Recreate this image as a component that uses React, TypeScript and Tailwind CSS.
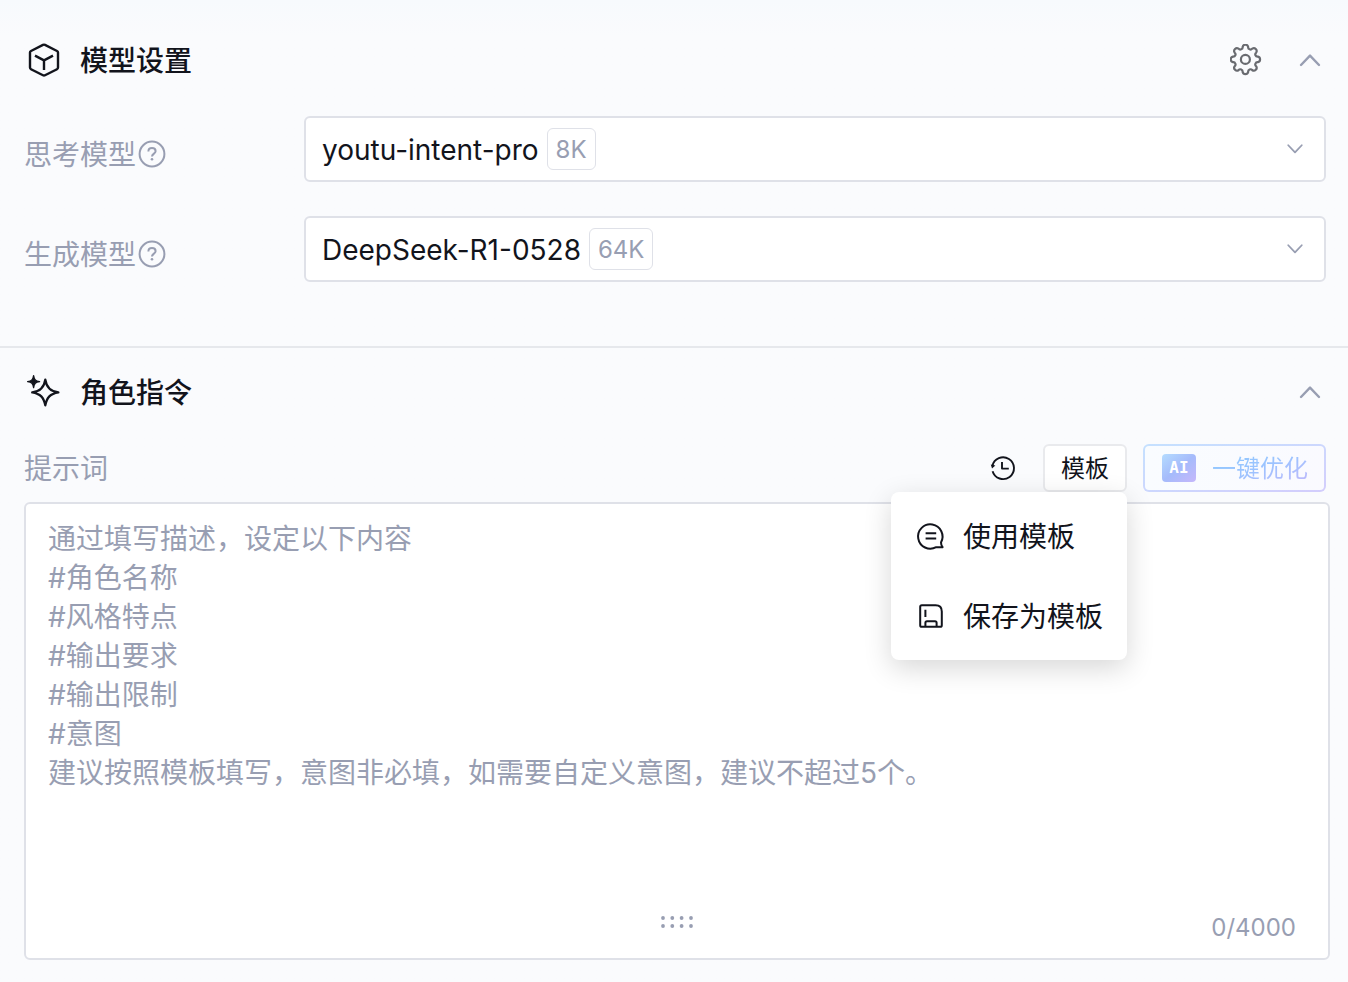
import React, { useState } from 'react';
import clsx from 'clsx';

interface IconProps {
  className?: string;
}

const CubeIcon: React.FC<IconProps> = ({ className }) => (
  <svg className={className} viewBox="0 0 36 36" fill="none" stroke="currentColor" strokeWidth={2.4} strokeLinejoin="round">
    <path d="M17 2.9Q18 2.4 19 2.9L31 9Q32 9.5 32 10.6V25.6Q32 26.7 31 27.2L19 33.2Q18 33.7 17 33.2L5 27.2Q4 26.7 4 25.6V10.6Q4 9.5 5 9Z" />
    <path d="M9 13.6L18 18.4L27 13.6M18 18.4V28" />
  </svg>
);

const SparkleIcon: React.FC<IconProps> = ({ className }) => (
  <svg className={className} viewBox="0 0 36 36" fill="none" stroke="currentColor" strokeWidth={2.3} strokeLinejoin="round">
    <path d="M19.3 5.6C20.4 13.6 24.2 17.4 32.4 18.4C24.2 19.8 20.8 23.4 19.3 31.4C17.8 23.4 14.4 19.8 6.2 18.4C14.4 17.4 18.2 13.6 19.3 5.6Z" />
    <path d="M7.6 1.6C8.2 5.7 9.5 7 13.6 7.6C9.5 8.2 8.2 9.5 7.6 13.6C7 9.5 5.7 8.2 1.6 7.6C5.7 7 7 5.7 7.6 1.6Z" fill="currentColor" strokeWidth={1.3} />
  </svg>
);

const GearIcon: React.FC<IconProps> = ({ className }) => (
  <svg className={className} viewBox="0.6 0.6 32 32" fill="none" stroke="currentColor" strokeWidth={2.2} strokeLinejoin="round">
    <path d="M13.23 3.5A2.85 2.85 0 0 1 18.77 3.5A2.3 2.3 0 0 0 22.88 5.2A2.85 2.85 0 0 1 26.8 9.12A2.3 2.3 0 0 0 28.5 13.23A2.85 2.85 0 0 1 28.5 18.77A2.3 2.3 0 0 0 26.8 22.88A2.85 2.85 0 0 1 22.88 26.8A2.3 2.3 0 0 0 18.77 28.5A2.85 2.85 0 0 1 13.23 28.5A2.3 2.3 0 0 0 9.12 26.8A2.85 2.85 0 0 1 5.2 22.88A2.3 2.3 0 0 0 3.5 18.77A2.85 2.85 0 0 1 3.5 13.23A2.3 2.3 0 0 0 5.2 9.12A2.85 2.85 0 0 1 9.12 5.2A2.3 2.3 0 0 0 13.23 3.5Z" />
    <circle cx="16" cy="16" r="4.5" />
  </svg>
);

const ChevronIcon: React.FC<IconProps> = ({ className }) => (
  <svg className={className} viewBox="0 0 24 24" fill="none" stroke="currentColor" strokeWidth={2.4} strokeLinecap="round" strokeLinejoin="round">
    <path d="M3 7L12 16.4L21 7" />
  </svg>
);

const HelpIcon: React.FC<IconProps> = ({ className }) => (
  <svg className={className} viewBox="0 0 28 28" fill="none" stroke="currentColor" strokeWidth={2}>
    <circle cx="14" cy="14" r="12.4" />
    <path d="M10.4 11.4C10.4 9.3 12 8 14 8S17.6 9.3 17.6 11.2C17.6 13.6 14 13.7 14 16.6" />
    <circle cx="14" cy="19.2" r="1.3" fill="currentColor" stroke="none" />
  </svg>
);

const HistoryIcon: React.FC<IconProps> = ({ className }) => (
  <svg className={className} viewBox="0 0 28 28" fill="none" stroke="currentColor" strokeWidth={1.9} strokeLinejoin="round">
    <path d="M3.4 12A10.9 10.9 0 1 1 3.6 17.2" />
    <path d="M13 8V14.6H19.8" />
    <path d="M1.8 10.4L6.4 11.4L3 14.4Z" fill="currentColor" stroke="none" />
  </svg>
);

const ChatIcon: React.FC<IconProps> = ({ className }) => (
  <svg className={className} viewBox="0 0 32 32" fill="none" stroke="currentColor" strokeWidth={2} strokeLinejoin="round">
    <path d="M27.6 27.2H21.2A12.2 12.2 0 1 1 26 22.4Q26 25 27.6 27.2Z" />
    <path d="M10.6 13.2H21.2M10.6 18.6H21.2" />
  </svg>
);

const SaveIcon: React.FC<IconProps> = ({ className }) => (
  <svg className={className} viewBox="0 0 32 32" fill="none" stroke="currentColor" strokeWidth={2} strokeLinejoin="round">
    <path d="M6.8 5.2H20.6Q26.8 5.2 26.8 11.4V25.2Q26.8 26.8 25.2 26.8H6.8Q5.2 26.8 5.2 25.2V6.8Q5.2 5.2 6.8 5.2Z" />
    <path d="M10.4 26.8V22.8Q10.4 21.2 12 21.2H20Q21.6 21.2 21.6 22.8V26.8M10.4 9.8V17" />
  </svg>
);

interface SectionHeaderProps {
  icon: React.ReactNode;
  title: string;
  children?: React.ReactNode;
}

const SectionHeader: React.FC<SectionHeaderProps> = ({ icon, title, children }) => (
  <header className="flex h-10 items-center gap-4">
    <div className="flex w-10 justify-center">{icon}</div>
    <h2 className="flex-1 pt-0.5 text-[28px] leading-9 font-medium">{title}</h2>
    <div className="flex items-center gap-8">
      {children}
      <button type="button" aria-label="收起" className="flex size-8 items-center justify-center text-[#989eb2]">
        <ChevronIcon className="size-6 rotate-180" />
      </button>
    </div>
  </header>
);

interface ModelFieldProps {
  id: string;
  label: string;
  model: string;
  size: string;
}

const ModelField: React.FC<ModelFieldProps> = ({ id, label, model, size }) => (
  <div className="flex items-start">
    <div className="flex h-[76px] w-[280px] shrink-0 items-center gap-0.5 text-[#989eb2]">
      <label htmlFor={id} className="pt-0.5 text-[28px] leading-9">{label}</label>
      <HelpIcon className="size-7" />
    </div>
    <div className="flex h-[66px] flex-1 items-center gap-2 rounded-md border-2 border-[#dfe1e8] bg-white px-4">
      <select id={id} className="field-sizing-content appearance-none bg-transparent pt-0.5 text-[28px] leading-9 outline-none">
        <option>{model}</option>
      </select>
      <span className="rounded-md border border-[#dfe1e8] px-2 pt-0.5 text-2xl leading-[38px] text-[#989eb2]">{size}</span>
      <ChevronIcon className="mr-1 ml-auto size-[18px] text-[#989eb2]" />
    </div>
  </div>
);

const menuItems = [
  { label: '使用模板', icon: ChatIcon },
  { label: '保存为模板', icon: SaveIcon },
];

const placeholder = [
  '通过填写描述，设定以下内容',
  '#角色名称',
  '#风格特点',
  '#输出要求',
  '#输出限制',
  '#意图',
  '建议按照模板填写，意图非必填，如需要自定义意图，建议不超过5个。',
].join('\n');

const App: React.FC = () => {
  const [prompt, setPrompt] = useState('');
  const [menuOpen, setMenuOpen] = useState(true);

  return (
    <div lang="zh-CN" className="min-h-screen bg-[#fafbfd] bg-linear-to-b from-[#f7fafd] to-[#fafbfd] to-[36px] font-['Inter','Noto_Sans_CJK_SC',sans-serif] text-[#12141c]">
      {/* Model settings */}
      <section className="border-b-2 border-[#e6e8ec] pt-10 pr-[22px] pb-[54px] pl-6">
        <SectionHeader icon={<CubeIcon className="size-9" />} title="模型设置">
          <button type="button" aria-label="设置" className="flex size-8 items-center justify-center text-[#696b70]">
            <GearIcon className="size-8" />
          </button>
        </SectionHeader>
        <div className="mt-9 flex flex-col gap-6">
          <ModelField id="think-model" label="思考模型" model="youtu-intent-pro" size="8K" />
          <ModelField id="gen-model" label="生成模型" model="DeepSeek-R1-0528" size="64K" />
        </div>
      </section>

      {/* Role prompt */}
      <section className="pt-6 pb-[22px]">
        <div className="pr-[22px] pl-6">
          <SectionHeader icon={<SparkleIcon className="size-9" />} title="角色指令" />
          <div className="mt-8 flex h-12 items-center gap-4">
            <label htmlFor="prompt" className="flex-1 pt-0.5 text-[28px] leading-9 text-[#989eb2]">提示词</label>
            <button type="button" aria-label="历史" className="flex size-12 items-center justify-center">
              <HistoryIcon className="size-7" />
            </button>
            <div className="relative">
              <button
                type="button"
                onClick={() => setMenuOpen(!menuOpen)}
                className="flex h-12 items-center rounded-md border-2 border-[#e9eaed] bg-white px-4 pt-0.5 text-2xl"
              >
                模板
              </button>
              {menuOpen && (
                <div className="absolute top-full right-0 z-10 rounded-lg bg-white py-1 shadow-[0_8px_28px_rgba(0,0,0,0.16)]">
                  {menuItems.map(({ label, icon: Icon }) => (
                    <button key={label} type="button" className="flex h-20 w-full items-center gap-4 px-6 text-[28px] whitespace-nowrap">
                      <Icon className="size-8" />
                      <span className="pt-0.5 leading-9">{label}</span>
                    </button>
                  ))}
                </div>
              )}
            </div>
            {/* Gradient frame around the optimise button */}
            <button type="button" disabled className="h-12 rounded-md bg-linear-to-br from-[#c5e1ff] to-[#d3cdfc] p-0.5">
              <span className="flex h-full items-center gap-4 rounded-sm bg-linear-to-r from-[#f9fcff] to-[#fafaff] pr-4 pl-[17px]">
                <span className="flex h-7 w-[34px] items-center justify-center rounded-sm bg-linear-to-br from-[#b5dcff] via-[#a5bbfb] to-[#c5b7fb] font-['DejaVu_Sans_Mono',monospace] text-base font-bold text-white">
                  AI
                </span>
                <span className="bg-linear-to-br from-[#8ccbff] via-[#9cc3ff] to-[#c1b8fc] bg-clip-text pt-0.5 text-2xl text-transparent">一键优化</span>
              </span>
            </button>
          </div>
        </div>

        <div className="mt-2.5 mr-[18px] ml-6 rounded-md border-2 border-[#dfe1e8] bg-white px-[22px] pt-4">
          <textarea
            id="prompt"
            value={prompt}
            maxLength={4000}
            onChange={(e) => setPrompt(e.target.value)}
            placeholder={placeholder}
            className="block h-[396px] w-full resize-none text-[28px] leading-[39px] outline-none placeholder:text-[#989eb2]"
          />
          <div className="grid h-[42px] grid-cols-3 text-[#989eb2]">
            <svg className="col-start-2 h-4 w-9 justify-self-center" viewBox="0 0 36 16" fill="currentColor">
              {[4, 13.3, 22.6, 32].map((x) => (
                <React.Fragment key={x}>
                  <circle cx={x} cy="2" r="1.9" />
                  <circle cx={x} cy="10" r="1.9" />
                </React.Fragment>
              ))}
            </svg>
            <span className={clsx('justify-self-end pr-2.5 text-2xl leading-6', prompt.length >= 4000 && 'text-red-500')}>
              {prompt.length}/4000
            </span>
          </div>
        </div>
      </section>
    </div>
  );
};

export default App;
